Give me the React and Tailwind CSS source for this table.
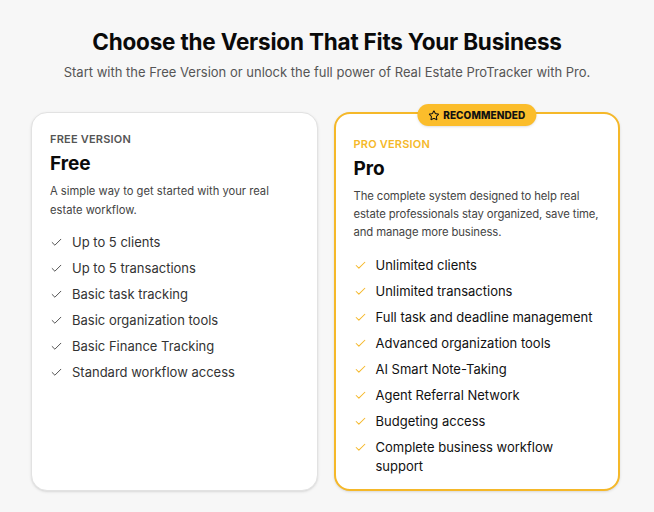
import { Check, Star } from 'lucide-react'

const freeFeatures = [
  'Up to 5 clients',
  'Up to 5 transactions',
  'Basic task tracking',
  'Basic organization tools',
  'Basic Finance Tracking',
  'Standard workflow access',
]

const proFeatures = [
  'Unlimited clients',
  'Unlimited transactions',
  'Full task and deadline management',
  'Advanced organization tools',
  'AI Smart Note-Taking',
  'Agent Referral Network',
  'Budgeting access',
  'Complete business workflow support',
]

export default function App() {
  return (
    <div className="min-h-screen bg-[#f7f7f7] pt-[27px]"
      style={{ fontFamily: 'Inter, "Noto Sans", sans-serif' }}>
      <h1 className="text-center text-[22.5px] leading-[30px] font-bold tracking-[-0.2px] text-[#0a0a0a]">
        Choose the Version That Fits Your Business
      </h1>
      <p className="text-center text-[13px] leading-[20px] text-[#555] mt-[5px]">
        Start with the Free Version or unlock the full power of Real Estate ProTracker with Pro.
      </p>

      <div className="w-[589px] ml-[31px] mt-[30px] grid grid-cols-2 gap-4">
        {/* Free */}
        <div className="h-[379px] rounded-2xl bg-white border border-[#e2e2e2] shadow-sm px-[18px] pt-[19px]">
          <div className="text-[11px] leading-[14px] font-semibold tracking-[0.2px] text-[#555]">FREE VERSION</div>
          <div className="text-[19px] leading-[24px] font-bold text-[#0a0a0a] mt-[6px]">Free</div>
          <p className="text-[11.2px] leading-[19px] text-[#444] mt-[6px] pr-2">
            A simple way to get started with your real estate workflow.
          </p>
          <ul className="mt-[13px] flex flex-col gap-[7px]">
            {freeFeatures.map(f => (
              <li key={f} className="flex items-start gap-[9px] text-[13px] leading-[19px] text-[#333]">
                <Check size={13} strokeWidth={1.7} className="mt-[3px] shrink-0 text-[#444]" />
                {f}
              </li>
            ))}
          </ul>
        </div>

        {/* Pro */}
        <div className="relative h-[379px] rounded-2xl bg-white border-2 border-[#f5b829] shadow-sm px-[18px] pt-[23px]">
          <div className="absolute -top-[10px] left-1/2 -translate-x-1/2 flex items-center gap-[4px] rounded-full bg-[#fbbd2b] px-[11px] h-[22px] shadow-sm">
            <Star size={11} strokeWidth={2.2} className="text-[#111]" />
            <span className="text-[10px] font-extrabold tracking-[0.1px] text-[#111]">RECOMMENDED</span>
          </div>
          <div className="text-[11px] leading-[14px] font-semibold tracking-[0.2px] text-[#f5b829]">PRO VERSION</div>
          <div className="text-[19px] leading-[24px] font-bold text-[#0a0a0a] mt-[6px]">Pro</div>
          <p className="text-[11.3px] leading-[18px] tracking-[-0.1px] text-[#444] mt-[6px] -mr-[6px]">
            The complete system designed to help real estate professionals stay organized, save time, and manage more business.
          </p>
          <ul className="mt-[15px] flex flex-col gap-[7px]">
            {proFeatures.map(f => (
              <li key={f} className="flex items-start gap-[9px] text-[13px] leading-[19px] text-[#111]">
                <Check size={13} strokeWidth={1.9} className="mt-[3px] shrink-0 text-[#f5b829]" />
                <span className="max-w-[220px]">{f}</span>
              </li>
            ))}
          </ul>
        </div>
      </div>
    </div>
  )
}
